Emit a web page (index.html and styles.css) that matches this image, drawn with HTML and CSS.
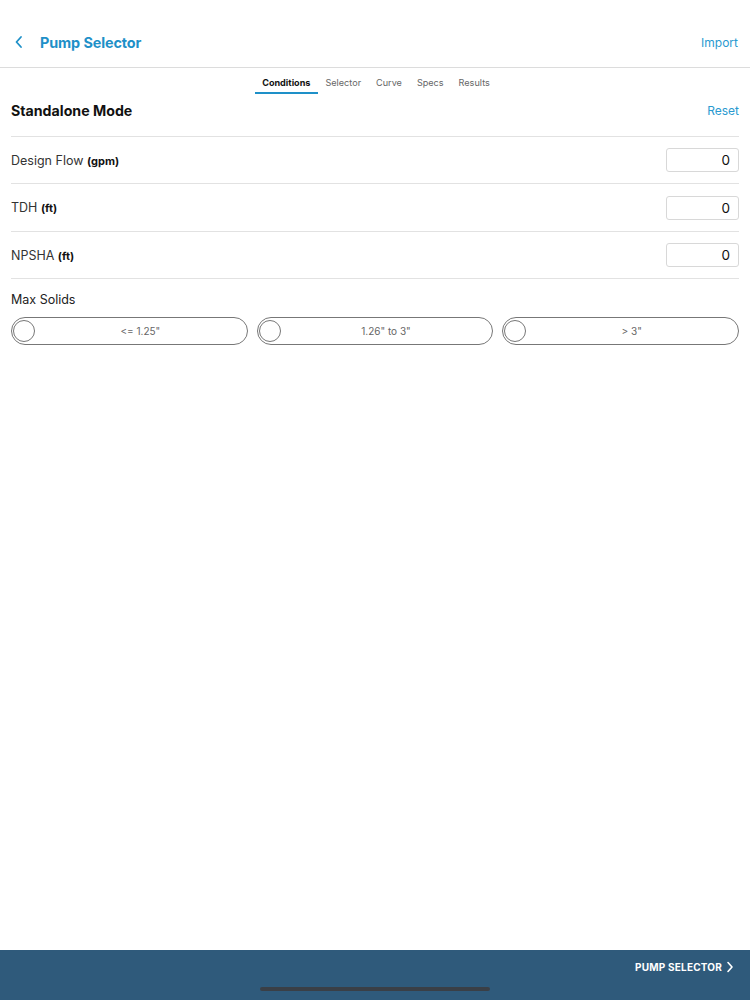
FILE: index.html
```html
<!DOCTYPE html>
<html lang="en">
<head>
    <meta charset="UTF-8">
    <meta name="viewport" content="width=device-width, initial-scale=1.0">
    <title>Pump Selector</title>
    <link rel="stylesheet" href="styles.css">
</head>
<body>
    <div class="app">
        <header class="nav-bar">
            <div class="nav-left">
                <svg class="back-icon" width="10" height="14" viewBox="0 0 10 14">
                    <path d="M7 2 L2.5 7 L7 12" fill="none" stroke="#1e90c8" stroke-width="1.8" stroke-linecap="round" stroke-linejoin="round"/>
                </svg>
                <span class="nav-title">Pump Selector</span>
            </div>
            <span class="nav-action">Import</span>
        </header>

        <nav class="tabs">
            <span class="tab active">Conditions</span>
            <span class="tab">Selector</span>
            <span class="tab">Curve</span>
            <span class="tab">Specs</span>
            <span class="tab">Results</span>
        </nav>

        <main class="content">
            <div class="section-head">
                <h1>Standalone Mode</h1>
                <span class="link">Reset</span>
            </div>

            <div class="field-row">
                <span class="field-label">Design Flow <b>(gpm)</b></span>
                <input class="field-input" type="text" value="0">
            </div>
            <div class="field-row tall">
                <span class="field-label">TDH <b>(ft)</b></span>
                <input class="field-input" type="text" value="0">
            </div>
            <div class="field-row">
                <span class="field-label">NPSHA <b>(ft)</b></span>
                <input class="field-input" type="text" value="0">
            </div>

            <div class="solids">
                <div class="solids-label">Max Solids</div>
                <div class="options">
                    <div class="option"><span class="radio"></span><span class="option-text">&lt;= 1.25"</span></div>
                    <div class="option"><span class="radio"></span><span class="option-text">1.26" to 3"</span></div>
                    <div class="option"><span class="radio"></span><span class="option-text">&gt; 3"</span></div>
                </div>
            </div>
        </main>

        <footer class="bottom-bar">
            <div class="bottom-action">
                PUMP SELECTOR
                <svg width="8" height="12" viewBox="0 0 8 12">
                    <path d="M2 1.5 L6 6 L2 10.5" fill="none" stroke="#fff" stroke-width="1.6" stroke-linecap="round" stroke-linejoin="round"/>
                </svg>
            </div>
            <div class="home-indicator"></div>
        </footer>
    </div>
</body>
</html>
```

FILE: styles.css
```css
body {
    font-family: 'Inter', 'Roboto', sans-serif;
    margin: 0;
    padding: 0;
    background: #fff;
    color: #111;
}

.app {
    width: 750px;
    height: 1000px;
    display: flex;
    flex-direction: column;
    overflow: hidden;
}

/* Navigation bar */
.nav-bar {
    height: 68px;
    box-sizing: border-box;
    padding: 17px 12px 0 14px;
    display: flex;
    align-items: center;
    justify-content: space-between;
    border-bottom: 1px solid #dcdcdc;
}

.nav-left {
    display: flex;
    align-items: center;
    gap: 16px;
}

.nav-title {
    color: #1e90c8;
    font-size: 14.4px;
    font-weight: 700;
    letter-spacing: -0.1px;
}

.nav-action {
    color: #2a9ad0;
    font-size: 12px;
}

/* Tabs */
.tabs {
    display: flex;
    justify-content: center;
    padding-top: 9px;
    padding-left: 2px;
}

.tab {
    font-size: 9.1px;
    color: #666;
    padding: 0 7.5px 4px;
    border-bottom: 2px solid transparent;
}

.tab.active {
    color: #111;
    font-weight: 700;
    border-bottom-color: #1e90c8;
}

/* Content */
.content {
    flex: 1;
    padding: 0 11px;
}

.section-head {
    display: flex;
    align-items: center;
    justify-content: space-between;
    height: 42px;
    border-bottom: 1px solid #e2e2e2;
}

.section-head h1 {
    margin: 0;
    font-size: 14.2px;
    font-weight: 700;
    padding-bottom: 10px;
}

.section-head .link {
    color: #2a9ad0;
    font-size: 12px;
    padding-bottom: 10px;
}

.field-row {
    display: flex;
    align-items: center;
    justify-content: space-between;
    height: 46px;
    border-bottom: 1px solid #e2e2e2;
}

.field-row.tall {
    height: 47px;
}

.field-label {
    font-size: 12.5px;
    color: #333;
}

.field-label b {
    font-size: 11px;
    color: #111;
}

.field-input {
    width: 73px;
    height: 24px;
    box-sizing: border-box;
    border: 1px solid #d8d8d8;
    border-radius: 3px;
    text-align: right;
    font-family: inherit;
    font-size: 13.5px;
    color: #111;
    padding: 0 8px;
    outline: none;
}

.solids-label {
    font-size: 12.5px;
    color: #222;
    margin: 13px 0 10px;
}

.options {
    display: grid;
    grid-template-columns: repeat(3, 1fr);
    gap: 9px;
}

.option {
    height: 28px;
    box-sizing: border-box;
    border: 1px solid #777;
    border-radius: 14px;
    display: flex;
    align-items: center;
    padding: 0 1px;
}

.radio {
    width: 22px;
    height: 22px;
    box-sizing: border-box;
    border: 1px solid #777;
    border-radius: 50%;
    flex-shrink: 0;
}

.option-text {
    flex: 1;
    text-align: center;
    font-size: 10px;
    color: #666;
}

/* Bottom bar */
.bottom-bar {
    height: 50px;
    background: #2f5a7b;
    display: flex;
    flex-direction: column;
}

.bottom-action {
    display: flex;
    align-items: center;
    justify-content: flex-end;
    gap: 4px;
    padding: 11px 16px 0 0;
    color: #fff;
    font-size: 10px;
    font-weight: 700;
    letter-spacing: 0.2px;
}

.home-indicator {
    width: 230px;
    height: 4px;
    border-radius: 2px;
    background: #3a3f46;
    margin: 14px auto 0;
}
```
